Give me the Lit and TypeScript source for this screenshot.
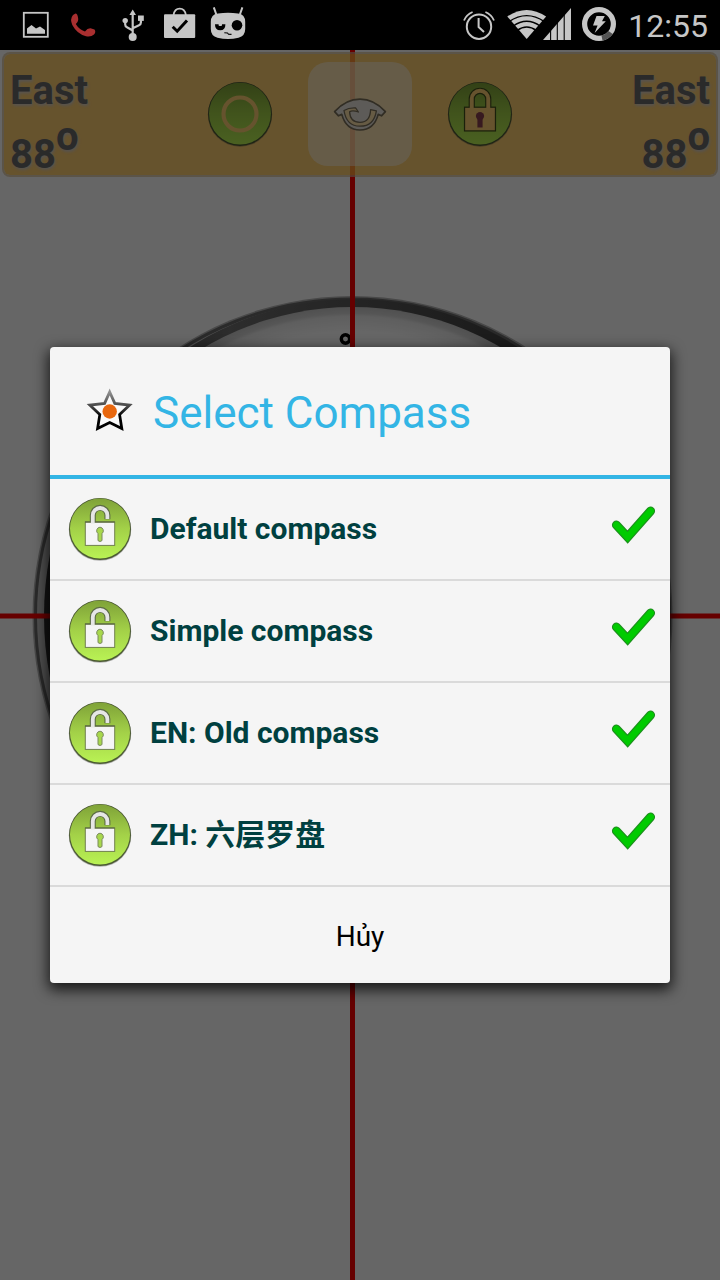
import { LitElement, html, css, svg } from "lit";
import { customElement, property, state } from "lit/decorators.js";

const FONT = css`Roboto, "Noto Sans CJK SC", sans-serif`;

/** Android status bar: notifications on the left, system state on the right. */
@customElement("status-bar")
class StatusBar extends LitElement {
  static styles = css`
    :host {
      display: flex;
      justify-content: space-between;
      height: 50px;
      padding: 0 12px;
      background: #000;
      color: #c6c6c6;
      font-family: ${FONT};
    }
    .group {
      display: flex;
      align-items: center;
    }
    svg {
      display: block;
      height: 50px;
      fill: none;
      stroke: none;
    }
    .cell {
      width: 48px;
    }
    .signal {
      width: 72px;
    }
    time {
      margin-left: 5px;
      padding-top: 2px;
      font-size: 32px;
      line-height: 50px;
    }
    .f {
      fill: currentColor;
    }
    .s {
      stroke: currentColor;
    }
    .k {
      fill: #000;
    }
    .ks {
      stroke: #000;
    }
  `;

  render() {
    return html`
      <div class="group">
        <svg class="cell" viewBox="12 0 48 50" aria-label="Screenshot">
          <rect class="s" x="23.8" y="12.8" width="24" height="24" stroke-width="1.8" />
          <path class="f" d="M27 33.8V28.5L31.5 25L36 28.5L40 26.5L45 30V33.8Z" />
        </svg>
        <svg class="cell" viewBox="60 0 48 50" aria-label="Missed call">
          <path fill="#a92f30" d="M73 15L75.5 13.6Q77.4 13.6 78 17.5Q79 21 75.8 24Q79 29.5 85 31.4Q87.5 28 90.5 28.2L94.5 29.5Q96.3 32 94 34.5Q91 37.2 86 36.2Q77 34 72.3 25Q69.7 19 73 15Z" />
        </svg>
        <svg class="cell" viewBox="108 0 48 50" aria-label="USB">
          <circle class="f" cx="132.7" cy="37" r="4" />
          <path class="f" d="M132.7 9.5L136 15H129.4Z" />
          <path class="s" stroke-width="2.2" d="M132.7 13V36M125.2 21V24.5Q125.2 26.5 127 27.2L132.7 30.5M140.9 20V22.5Q140.9 24.5 139 25.2L132.7 28.2" />
          <circle class="f" cx="125.2" cy="20.6" r="2.7" />
          <rect class="f" x="138" y="15.5" width="5.8" height="5.4" />
        </svg>
        <svg class="cell" viewBox="156 0 48 50" aria-label="Play Store">
          <rect class="f" x="164" y="14.3" width="31.2" height="23.7" rx="1" />
          <path class="s" stroke-width="1.7" d="M173.5 15Q174.5 8.6 179.7 8.6Q184.9 8.6 185.9 15" />
          <path class="ks" stroke-width="3" d="M172.7 26.8L177.2 31.2L187 20.4" />
        </svg>
        <svg class="cell" viewBox="204 0 48 50" aria-label="CyanogenMod">
          <path class="f" d="M218 13.6Q228 11.8 238 13.6Q245.2 14.5 245.2 22V29Q245.2 36 238.5 37.8Q228 40.3 217.5 37.8Q210.8 36 210.8 29V22Q210.8 14.5 218 13.6Z" />
          <path class="s" stroke-width="2" d="M216.5 15L213.8 7.3M239.7 15L242.4 7.3" />
          <path class="k" d="M215 24.2H225.4Q225.4 30.2 220.2 30.2Q215 30.2 215 24.2Z" />
          <path class="f" d="M218.6 24H222V25.4Q220.3 26.6 218.6 25.4Z" />
          <circle class="k" cx="237" cy="25.3" r="5.3" />
          <path class="ks" stroke-width="1.1" d="M224.3 32.8L227.5 33L228.5 34.3L231.5 34.4" />
        </svg>
      </div>
      <div class="group">
        <svg class="cell" viewBox="455 0 48 50" aria-label="Alarm">
          <circle class="s" cx="479" cy="26.7" r="12.2" stroke-width="2" />
          <path class="s" stroke-width="2" d="M478.6 18V27L484 32" />
          <path class="s" stroke-width="1.8" d="M464 20.5Q466.5 14.5 472.6 12M494 20.5Q491.5 14.5 485.4 12" />
        </svg>
        <svg class="signal" viewBox="503 0 72 50" aria-label="Signal strength">
          <path class="f" d="M526.7 39L507.3 16.5Q526.7 3.3 546.1 16.5Z" />
          <path class="ks" stroke-width="1.4" d="M509 21.6Q526.7 9.6 544.4 21.6M513 26.2Q526.7 16.4 540.4 26.2M517 30.6Q526.7 23.4 536.4 30.6" />
          <path class="f" d="M543 40L571 8V40Z" />
          <path class="ks" stroke-width="1.1" d="M550.6 28V41M557.3 20V41M564.2 12V41" />
        </svg>
        <svg class="cell" viewBox="575 0 48 50" aria-label="Battery charging">
          <circle class="s" cx="599" cy="24" r="14.4" stroke-width="5.2" />
          <path stroke="#555" stroke-width="5.2" d="M610.6 32.5A14.4 14.4 0 0 1 602 38.1" />
          <path class="f" d="M596.5 16H604.8L602 21.3H605.8L594.6 33L597.6 25.6H593Z" />
        </svg>
        <time>12:55</time>
      </div>
    `;
  }
}

/** Shared gradient for the round green badges. */
const badge = (id: string) => svg`
  <defs>
    <linearGradient id=${id} x1="0" y1="0" x2="0" y2="1">
      <stop offset="0" stop-color="#7fa238" />
      <stop offset="0.5" stop-color="#a3d148" />
      <stop offset="1" stop-color="#b9f254" />
    </linearGradient>
  </defs>
  <circle cx="32" cy="32.6" r="31.2" fill="#444" opacity="0.4" />
  <circle cx="32" cy="32" r="31" fill="#4b5a32" />
  <circle cx="32" cy="31.6" r="30" fill="url(#${id})" />
`;

@customElement("compass-stage")
class CompassStage extends LitElement {
  @property() heading = "East";
  @property({ type: Number }) degrees = 88;

  static styles = css`
    :host {
      display: block;
      font-family: ${FONT};
    }
    .dial {
      position: absolute;
      inset: 0;
      width: 100%;
      height: 100%;
    }
    .toolbar {
      position: relative;
      display: grid;
      grid-template-columns: 1fr auto 1fr;
      margin: 2px 2px 0;
      padding: 8px 6px 9px;
      border: 2px solid rgba(215, 190, 150, 0.7);
      border-radius: 8px;
      background: rgba(255, 191, 66, 0.757);
      background-clip: padding-box;
    }
    .reading {
      color: #6a6a6a;
      font-size: 40px;
      font-weight: 700;
      line-height: 64px;
      height: 104px;
      margin: 0;
      margin-top: -3px;
      text-shadow: 1px 2px 3px rgba(205, 205, 215, 0.8);
    }
    .end {
      text-align: right;
    }
    sup {
      font-size: 40px;
      line-height: 0;
      vertical-align: 18px;
    }
    .tools {
      display: grid;
      grid-template-columns: 120px 104px 120px;
      justify-content: center;
      place-items: center;
      column-gap: 8px;
    }
    button {
      display: grid;
      place-items: center;
      width: 104px;
      height: 104px;
      padding: 0;
      border: 0;
      border-radius: 20px;
      background: none;
    }
    .active {
      background: rgba(255, 255, 255, 0.48);
    }
    .round {
      width: 66px;
      height: 66px;
    }
    .eye {
      width: 54px;
      height: 36px;
    }
  `;

  render() {
    const reading = html`${this.heading}<br />${this.degrees}<sup>o</sup>`;
    return html`
      <svg class="dial" viewBox="0 50 720 1230" preserveAspectRatio="xMidYMid slice" aria-hidden="true">
        <defs>
          <linearGradient id="rim" x1="0" y1="0" x2="1" y2="0">
            <stop offset="0" stop-color="#303030" />
            <stop offset="0.3" stop-color="#707070" />
            <stop offset="0.7" stop-color="#484848" />
            <stop offset="1" stop-color="#404040" />
          </linearGradient>
          <radialGradient id="face">
            <stop offset="0.92" stop-color="#fff" />
            <stop offset="0.97" stop-color="#ececec" />
            <stop offset="0.98" stop-color="#d6d6d6" />
            <stop offset="1" stop-color="#c8c8c8" />
          </radialGradient>
        </defs>
        <circle cx="352.5" cy="616" r="320" fill="#b4b4b4" />
        <circle cx="352.5" cy="616" r="317" fill="#c4c4c4" stroke="#6a6a6a" stroke-width="3" />
        <ellipse cx="354" cy="616" rx="310" ry="317" fill="url(#rim)" />
        <ellipse cx="352.5" cy="616" rx="300" ry="309" fill="url(#face)" />
        <circle cx="345.5" cy="339" r="4.2" fill="#fff" stroke="#000" stroke-width="3.4" />
        <path d="M352.5 50V1280M0 616H720" stroke="#f00" stroke-width="5" />
      </svg>
      <header class="toolbar">
        <p class="reading">${reading}</p>
        <div class="tools">
          <button aria-label="Compass ring">
            <svg class="round" viewBox="0 0 64 64">
              ${badge("ring")}
              <circle cx="32" cy="32" r="16" fill="none" stroke="#ffcf73" stroke-width="4" />
            </svg>
          </button>
          <button class="active" aria-label="Show or hide">
            <svg class="eye" viewBox="333 97 54 36" fill="none" stroke="#7a705a" stroke-width="1.7" stroke-linejoin="round">
              <path fill="#e8e4dc" d="M334.6 112.6Q346 100.2 360 100.2Q374 100.2 385.4 112.6L381.5 116.8L378.2 115.4Q374 131 360 131Q346 131 341.8 115.4L338.5 116.8Z" />
              <path fill="#ffe3ab" stroke-width="1.3" d="M344 111.5Q349 108.6 355.7 109L358.4 113Q352.4 110.8 349.6 112.8Q350 123.4 360 123.4Q370.2 123.4 370.6 110.6L376.4 111.8Q374 127.2 360 127.2Q346.4 127.2 344 111.5Z" />
            </svg>
          </button>
          <button aria-label="Lock compass">
            <svg class="round" viewBox="0 0 64 64">
              ${badge("locked")}
              <path d="M24 26V17.5A8 8 0 0 1 40 17.5V26" fill="none" stroke="#42501c" stroke-width="6" />
              <rect x="17" y="25.4" width="30" height="23" fill="#ffcf73" stroke="#42501c" stroke-width="1.2" />
              <path d="M24 26.5V17.5A8 8 0 0 1 40 17.5V26.5" fill="none" stroke="#ffcf73" stroke-width="3.8" />
              <circle cx="32" cy="34" r="4" fill="#8b4050" />
              <path d="M30 35H34V44.6H30Z" fill="#8b4050" stroke="#8b4050" stroke-width="1" />
            </svg>
          </button>
        </div>
        <p class="reading end">${reading}</p>
      </header>
    `;
  }
}

@customElement("compass-picker")
class CompassPicker extends LitElement {
  @property({ type: Array }) options: string[] = [];

  static styles = css`
    :host {
      display: block;
      border-radius: 4px;
      background: #f5f5f5;
      box-shadow: 0 5px 14px 2px rgba(0, 0, 0, 0.75);
      font-family: ${FONT};
      overflow: hidden;
    }
    .title {
      display: flex;
      align-items: center;
      gap: 19px;
      height: 128px;
      padding: 0 36px;
      border-bottom: 4px solid #33b5e5;
    }
    h1 {
      margin: 0;
      padding-top: 3px;
      color: #33b5e5;
      font-size: 44px;
      font-weight: 400;
      line-height: 52px;
    }
    .star {
      width: 48px;
      height: 48px;
    }
    ul {
      margin: 0;
      padding: 0;
      list-style: none;
    }
    li {
      border-bottom: 2px solid #dadada;
    }
    button {
      display: flex;
      align-items: center;
      width: 100%;
      border: 0;
      background: none;
      font-family: inherit;
    }
    .option {
      height: 100px;
      padding: 0 14px 0 18px;
      gap: 18px;
      color: #004040;
      font-size: 30px;
      font-weight: 700;
    }
    .name {
      flex: 1;
      height: 36px;
      line-height: 36px;
      text-align: left;
    }
    .lock {
      width: 64px;
      height: 64px;
    }
    .check {
      width: 46px;
      height: 42px;
      margin-bottom: 8px;
    }
    .cancel {
      justify-content: center;
      height: 96px;
      padding: 2px 0 0;
      color: #000;
      font-size: 28px;
    }
  `;

  private row(name: string) {
    return html`
      <li>
        <button class="option">
          <svg class="lock" viewBox="0 0 64 64" aria-hidden="true">
            ${badge("open")}
            <path d="M24.8 26V18A7.3 7.3 0 0 1 39.4 18V22.2" fill="none" stroke="#5c6b45" stroke-width="6" />
            <rect x="17.3" y="25" width="29.4" height="23.4" fill="#f5f5f5" stroke="#71804f" stroke-width="1" />
            <path d="M17 25H46.8" stroke="#55633c" stroke-width="1.2" />
            <path d="M24.8 26.5V18.3A7.3 7.3 0 0 1 39.4 18.3V22" fill="none" stroke="#e6e6e6" stroke-width="3.8" />
            <path d="M32 30.2A3.6 3.6 0 0 1 34 36.6V43.6Q32 45.4 30 43.6V36.6A3.6 3.6 0 0 1 32 30.2Z" fill="#a8d84c" stroke="#7a8a5c" stroke-width="1" />
          </svg>
          <span class="name">${name}</span>
          <svg class="check" viewBox="0 0 46 42" fill="none" stroke-linecap="round" aria-hidden="true">
            <path d="M6.4 21L17.6 33L40.6 7" stroke="#1d8f1d" stroke-width="9" />
            <path d="M6.4 21L17.6 33L40.6 7" stroke="#00cb00" stroke-width="6.6" />
          </svg>
        </button>
      </li>
    `;
  }

  render() {
    return html`
      <div class="title">
        <svg class="star" viewBox="86 387 48 48" aria-hidden="true">
          <defs>
            <linearGradient id="outline" x1="0" y1="0" x2="0" y2="1">
              <stop offset="0" stop-color="#909090" />
              <stop offset="0.4" stop-color="#444" />
              <stop offset="0.65" stop-color="#000" />
            </linearGradient>
          </defs>
          <path fill="#fafafa" stroke="url(#outline)" stroke-width="2.8" d="M109.7 392L114.8 403.4L129.6 405L119.6 414.6L121.8 428.6L109.7 422.6L97.6 428.6L99.8 414.6L89.8 405L104.6 403.4Z" />
          <circle cx="109.7" cy="411.5" r="7.2" fill="#e8670e" />
        </svg>
        <h1>Select Compass</h1>
      </div>
      <ul>
        ${this.options.map((name) => this.row(name))}
      </ul>
      <button class="cancel">Hủy</button>
    `;
  }
}

@customElement("app-root")
class AppRoot extends LitElement {
  @state() private options = ["Default compass", "Simple compass", "EN: Old compass", "ZH: 六层罗盘"];

  static styles = css`
    :host {
      display: flex;
      flex-direction: column;
      min-height: 100vh;
    }
    .stage {
      position: relative;
      flex: 1;
      display: grid;
      background: #fff;
      overflow: hidden;
    }
    compass-stage,
    .scrim {
      grid-area: 1 / 1;
    }
    .scrim {
      position: relative;
      display: grid;
      align-items: center;
      padding: 0 50px;
      background: rgba(0, 0, 0, 0.6);
    }
  `;

  render() {
    return html`
      <status-bar></status-bar>
      <main class="stage">
        <compass-stage></compass-stage>
        <div class="scrim">
          <compass-picker role="dialog" aria-label="Select Compass" .options=${this.options}></compass-picker>
        </div>
      </main>
    `;
  }
}
